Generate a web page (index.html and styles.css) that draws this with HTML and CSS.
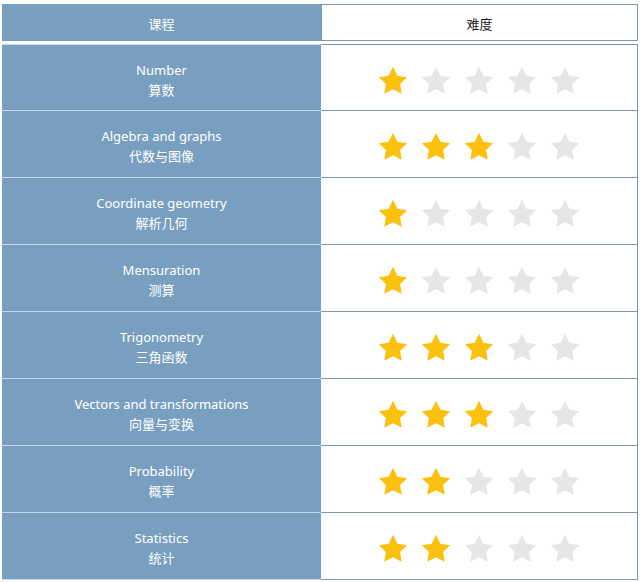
FILE: index.html
```html
<!DOCTYPE html>
<html lang="zh">
<head>
<meta charset="utf-8">
<link rel="stylesheet" href="styles.css">
</head>
<body>
<svg width="0" height="0" class="defs">
  <defs>
    <polygon id="star" points="12,2 15.09,8.26 22,9.27 17,14.14 18.18,21.02 12,17.77 5.82,21.02 7,14.14 2,9.27 8.91,8.26"/>
  </defs>
</svg>
<div class="table">
  <div class="row head">
    <div class="cell name">课程</div>
    <div class="cell level">难度</div>
  </div>
  <div class="body">
    <div class="row">
      <div class="cell name"><span>Number</span><span>算数</span></div>
      <div class="cell level"><div class="stars">
        <svg class="on" viewBox="0 0 24 24"><use href="#star"/></svg>
        <svg class="off" viewBox="0 0 24 24"><use href="#star"/></svg>
        <svg class="off" viewBox="0 0 24 24"><use href="#star"/></svg>
        <svg class="off" viewBox="0 0 24 24"><use href="#star"/></svg>
        <svg class="off" viewBox="0 0 24 24"><use href="#star"/></svg>
      </div></div>
    </div>
    <div class="row">
      <div class="cell name"><span>Algebra and graphs</span><span>代数与图像</span></div>
      <div class="cell level"><div class="stars">
        <svg class="on" viewBox="0 0 24 24"><use href="#star"/></svg>
        <svg class="on" viewBox="0 0 24 24"><use href="#star"/></svg>
        <svg class="on" viewBox="0 0 24 24"><use href="#star"/></svg>
        <svg class="off" viewBox="0 0 24 24"><use href="#star"/></svg>
        <svg class="off" viewBox="0 0 24 24"><use href="#star"/></svg>
      </div></div>
    </div>
    <div class="row">
      <div class="cell name"><span>Coordinate geometry</span><span>解析几何</span></div>
      <div class="cell level"><div class="stars">
        <svg class="on" viewBox="0 0 24 24"><use href="#star"/></svg>
        <svg class="off" viewBox="0 0 24 24"><use href="#star"/></svg>
        <svg class="off" viewBox="0 0 24 24"><use href="#star"/></svg>
        <svg class="off" viewBox="0 0 24 24"><use href="#star"/></svg>
        <svg class="off" viewBox="0 0 24 24"><use href="#star"/></svg>
      </div></div>
    </div>
    <div class="row">
      <div class="cell name"><span>Mensuration</span><span>测算</span></div>
      <div class="cell level"><div class="stars">
        <svg class="on" viewBox="0 0 24 24"><use href="#star"/></svg>
        <svg class="off" viewBox="0 0 24 24"><use href="#star"/></svg>
        <svg class="off" viewBox="0 0 24 24"><use href="#star"/></svg>
        <svg class="off" viewBox="0 0 24 24"><use href="#star"/></svg>
        <svg class="off" viewBox="0 0 24 24"><use href="#star"/></svg>
      </div></div>
    </div>
    <div class="row">
      <div class="cell name"><span>Trigonometry</span><span>三角函数</span></div>
      <div class="cell level"><div class="stars">
        <svg class="on" viewBox="0 0 24 24"><use href="#star"/></svg>
        <svg class="on" viewBox="0 0 24 24"><use href="#star"/></svg>
        <svg class="on" viewBox="0 0 24 24"><use href="#star"/></svg>
        <svg class="off" viewBox="0 0 24 24"><use href="#star"/></svg>
        <svg class="off" viewBox="0 0 24 24"><use href="#star"/></svg>
      </div></div>
    </div>
    <div class="row">
      <div class="cell name"><span>Vectors and transformations</span><span>向量与变换</span></div>
      <div class="cell level"><div class="stars">
        <svg class="on" viewBox="0 0 24 24"><use href="#star"/></svg>
        <svg class="on" viewBox="0 0 24 24"><use href="#star"/></svg>
        <svg class="on" viewBox="0 0 24 24"><use href="#star"/></svg>
        <svg class="off" viewBox="0 0 24 24"><use href="#star"/></svg>
        <svg class="off" viewBox="0 0 24 24"><use href="#star"/></svg>
      </div></div>
    </div>
    <div class="row">
      <div class="cell name"><span>Probability</span><span>概率</span></div>
      <div class="cell level"><div class="stars">
        <svg class="on" viewBox="0 0 24 24"><use href="#star"/></svg>
        <svg class="on" viewBox="0 0 24 24"><use href="#star"/></svg>
        <svg class="off" viewBox="0 0 24 24"><use href="#star"/></svg>
        <svg class="off" viewBox="0 0 24 24"><use href="#star"/></svg>
        <svg class="off" viewBox="0 0 24 24"><use href="#star"/></svg>
      </div></div>
    </div>
    <div class="row">
      <div class="cell name"><span>Statistics</span><span>统计</span></div>
      <div class="cell level"><div class="stars">
        <svg class="on" viewBox="0 0 24 24"><use href="#star"/></svg>
        <svg class="on" viewBox="0 0 24 24"><use href="#star"/></svg>
        <svg class="off" viewBox="0 0 24 24"><use href="#star"/></svg>
        <svg class="off" viewBox="0 0 24 24"><use href="#star"/></svg>
        <svg class="off" viewBox="0 0 24 24"><use href="#star"/></svg>
      </div></div>
    </div>
  </div>
</div>
</body>
</html>
```
FILE: styles.css
```css
html, body {
  margin: 0;
  padding: 0;
  background: #ffffff;
}
body {
  font-family: "Noto Sans", "Noto Sans CJK SC", sans-serif;
  font-size: 13px;
}
.defs {
  position: absolute;
  width: 0;
  height: 0;
}
.table {
  width: 636px;
  margin: 4px 0 0 2px;
}
.row {
  display: grid;
  grid-template-columns: 319px 1fr;
  height: 67px;
}
.row.head {
  height: 37px;
  margin-bottom: 3px;
}
.cell {
  box-sizing: border-box;
  display: flex;
  align-items: center;
  justify-content: center;
}
.name {
  background: #789fbf;
  color: #ffffff;
  flex-direction: column;
  line-height: 20px;
  padding-top: 4px;
  border-bottom: 1px solid #c9d8e6;
}
.level {
  background: #ffffff;
  border-right: 1px solid #7b99b5;
  border-bottom: 1px solid #7b99b5;
  padding-top: 6px;
}
.head .name {
  border-bottom: 1px solid #7b99b5;
  border-top: 1px solid #789fbf;
  padding-top: 2px;
}
.head .level {
  color: #222222;
  border-top: 1px solid #7b99b5;
  border-left: 1px solid #7b99b5;
  padding-top: 2px;
}
.body .row:first-child .level {
  border-top: 1px solid #7b99b5;
}
.body .row:first-child .name {
  border-top: 1px solid #c9d8e6;
}
.stars {
  display: flex;
  gap: 9px;
}
.stars svg {
  width: 34px;
  height: 34px;
  display: block;
}
.stars .on {
  fill: #fcc10f;
}
.stars .off {
  fill: #e6e6e6;
}
```
